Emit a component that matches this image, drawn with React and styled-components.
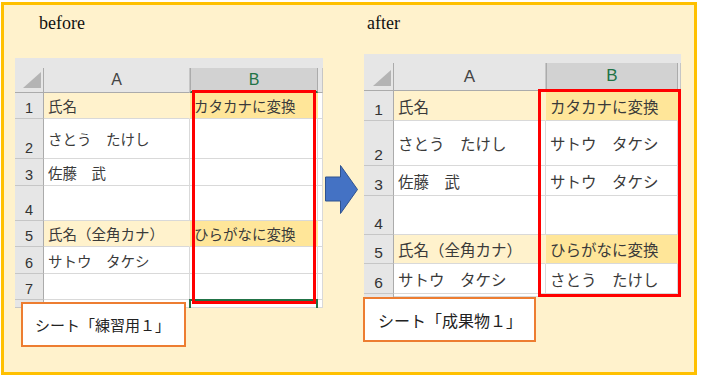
import React from 'react';
import styled, { createGlobalStyle } from 'styled-components';

const GlobalStyle = createGlobalStyle`
  body {
    margin: 0;
    background: #ffffff;
  }
`;

const CJK = `"Noto Sans CJK JP", "Noto Sans", sans-serif`;

const Frame = styled.div`
  box-sizing: border-box;
  width: 696px;
  height: 373px;
  margin: 2px 0 0 1px;
  padding-left: 11px;
  border: 3px solid #ffc000;
  background: #fff2cc;
  display: flex;
  align-items: flex-start;
`;

const Panel = styled.div`
  display: flex;
  flex-direction: column;
  margin-left: ${(p) => p.$offset}px;
`;

const Title = styled.div`
  margin: 8px 0 0 ${(p) => p.$indent}px;
  height: 21px;
  line-height: 21px;
  font-family: "Liberation Serif", serif;
  font-size: 18px;
  color: #111111;
`;

const Sheet = styled.div`
  position: relative;
  overflow: hidden;
  margin-top: ${(p) => p.$top}px;
  padding-top: ${(p) => p.$strip}px;
  background: #e6e6e6;
`;

const Grid = styled.div`
  display: grid;
  grid-template-columns: ${(p) => p.$cols};
  grid-template-rows: ${(p) => p.$rows};
  background: #ffffff;
`;

const Corner = styled.div`
  box-sizing: border-box;
  display: flex;
  align-items: flex-end;
  justify-content: flex-end;
  padding: 0 2px 4px 0;
  background: #e6e6e6;
  border-right: 1px solid #ababab;
  border-bottom: 1px solid #ababab;
`;

const ColHead = styled.div`
  box-sizing: border-box;
  display: flex;
  align-items: center;
  justify-content: center;
  font-family: "Liberation Sans", sans-serif;
  font-size: ${(p) => p.$size + 1.5}px;
  color: ${(p) => (p.$active ? '#217346' : '#444444')};
  background: ${(p) => (p.$active ? '#d2d2d2' : '#e6e6e6')};
  border-right: 1px solid ${(p) => (p.$active ? '#ababab' : '#c6c6c6')};
  border-left: ${(p) => (p.$active ? '1px solid #ababab' : '0')};
  border-bottom: ${(p) => (p.$active ? '2px solid #217346' : '1px solid #ababab')};
`;

const RowHead = styled.div`
  box-sizing: border-box;
  display: flex;
  align-items: flex-end;
  justify-content: center;
  padding-bottom: 3px;
  font-family: "Liberation Sans", sans-serif;
  font-size: ${(p) => p.$size}px;
  line-height: 1;
  color: #333333;
  background: #e6e6e6;
  border-right: 1px solid #ababab;
  border-bottom: 1px solid #c6c6c6;
`;

const Cell = styled.div`
  box-sizing: border-box;
  display: flex;
  align-items: center;
  padding-left: 4px;
  white-space: nowrap;
  overflow: hidden;
  font-family: ${CJK};
  font-size: ${(p) => p.$size}px;
  color: #3a3a3a;
  background: ${(p) => p.$fill || '#ffffff'};
  border-right: 1px solid ${(p) => (p.$fill ? p.$fill : '#d9d9d9')};
  border-bottom: 1px solid #d9d9d9;
`;

const RedBox = styled.div`
  position: absolute;
  box-sizing: border-box;
  border: 3px solid #ff0000;
`;

const Selection = styled.div`
  position: absolute;
  box-sizing: border-box;
  border: 2px solid #217346;
`;

const Label = styled.div`
  position: relative;
  box-sizing: border-box;
  display: flex;
  align-items: center;
  width: ${(p) => p.$w}px;
  height: 45px;
  margin: ${(p) => p.$mt}px 0 0 ${(p) => p.$ml}px;
  padding-left: ${(p) => p.$pad}px;
  background: #ffffff;
  border: 2px solid #ed7d31;
  font-family: "Liberation Serif", ${CJK};
  font-size: ${(p) => p.$size}px;
  color: #222222;
  white-space: nowrap;
`;

const ArrowWrap = styled.div`
  margin: 160px 0 0 2px;
  width: 33px;
  height: 49px;
`;

const FILL_A = '#fff2cc';
const FILL_B = '#ffe699';

const beforeSheet = {
  cols: [29, 146, 128, 5],
  header: 25,
  strip: 10,
  size: 14.5,
  rows: [
    { h: 26, a: '氏名', b: 'カタカナに変換', fill: true },
    { h: 40, a: 'さとう　たけし' },
    { h: 27, a: '佐藤　武' },
    { h: 35 },
    { h: 26, a: '氏名（全角カナ）', b: 'ひらがなに変換', fill: true },
    { h: 27, a: 'サトウ　タケシ' },
    { h: 26 },
    { h: 8, n: '' },
  ],
};

const afterSheet = {
  cols: [30, 152, 132, 3],
  header: 28,
  strip: 9,
  size: 15.5,
  rows: [
    { h: 30, a: '氏名', b: 'カタカナに変換', fill: true },
    { h: 45, a: 'さとう　たけし', b: 'サトウ　タケシ' },
    { h: 30, a: '佐藤　武', b: 'サトウ　タケシ' },
    { h: 39 },
    { h: 29, a: '氏名（全角カナ）', b: 'ひらがなに変換', fill: true },
    { h: 30, a: 'サトウ　タケシ', b: 'さとう　たけし' },
    { h: 3, n: '' },
  ],
};

const CornerMark = () => (
  <svg width="18" height="16" viewBox="0 0 18 16">
    <polygon points="18,0 18,16 0,16" fill="#b4b4b4" />
  </svg>
);

const BlockArrow = () => (
  <svg width="33" height="49" viewBox="0 0 33 49">
    <polygon
      points="0.5,12 15.5,12 15.5,0.5 32.5,24.5 15.5,48.5 15.5,36 0.5,36"
      fill="#4472c4"
      stroke="#2f528f"
      strokeWidth="1"
    />
  </svg>
);

const SpreadSheet = ({ data, top, redBox, selection }) => {
  const colTemplate = data.cols.map((c) => `${c}px`).join(' ');
  const rowTemplate = [data.header, ...data.rows.map((r) => r.h)].map((h) => `${h}px`).join(' ');
  return (
    <Sheet $top={top} $strip={data.strip}>
      <Grid $cols={colTemplate} $rows={rowTemplate}>
        <Corner>
          <CornerMark />
        </Corner>
        <ColHead $size={data.size}>A</ColHead>
        <ColHead $size={data.size} $active>B</ColHead>
        <ColHead $size={data.size} />
        {data.rows.map((r, i) => (
          <React.Fragment key={i}>
            <RowHead $size={data.size}>{r.n === undefined ? i + 1 : r.n}</RowHead>
            <Cell $size={data.size} $fill={r.fill ? FILL_A : null}>{r.a}</Cell>
            <Cell $size={data.size} $fill={r.fill ? FILL_B : null}>{r.b}</Cell>
            <Cell $size={data.size} />
          </React.Fragment>
        ))}
      </Grid>
      {selection && <Selection style={selection} />}
      <RedBox style={redBox} />
    </Sheet>
  );
};

export default function App() {
  return (
    <>
      <GlobalStyle />
      <Frame>
        <Panel $offset={0}>
          <Title $indent={24}>before</Title>
          <SpreadSheet
            data={beforeSheet}
            top={24}
            redBox={{ left: 177, top: 32, width: 124, height: 214 }}
            selection={{ left: 174, top: 241, width: 129, height: 14 }}
          />
          <Label $w={165} $mt={-6} $ml={6} $pad={12} $size={15}>
            シート「練習用１」
          </Label>
        </Panel>
        <ArrowWrap>
          <BlockArrow />
        </ArrowWrap>
        <Panel $offset={6}>
          <Title $indent={3}>after</Title>
          <SpreadSheet
            data={afterSheet}
            top={20}
            redBox={{ left: 174, top: 35, width: 143, height: 208 }}
          />
          <Label $w={173} $mt={0} $ml={-1} $pad={13} $size={16}>
            シート「成果物１」
          </Label>
        </Panel>
      </Frame>
    </>
  );
}
